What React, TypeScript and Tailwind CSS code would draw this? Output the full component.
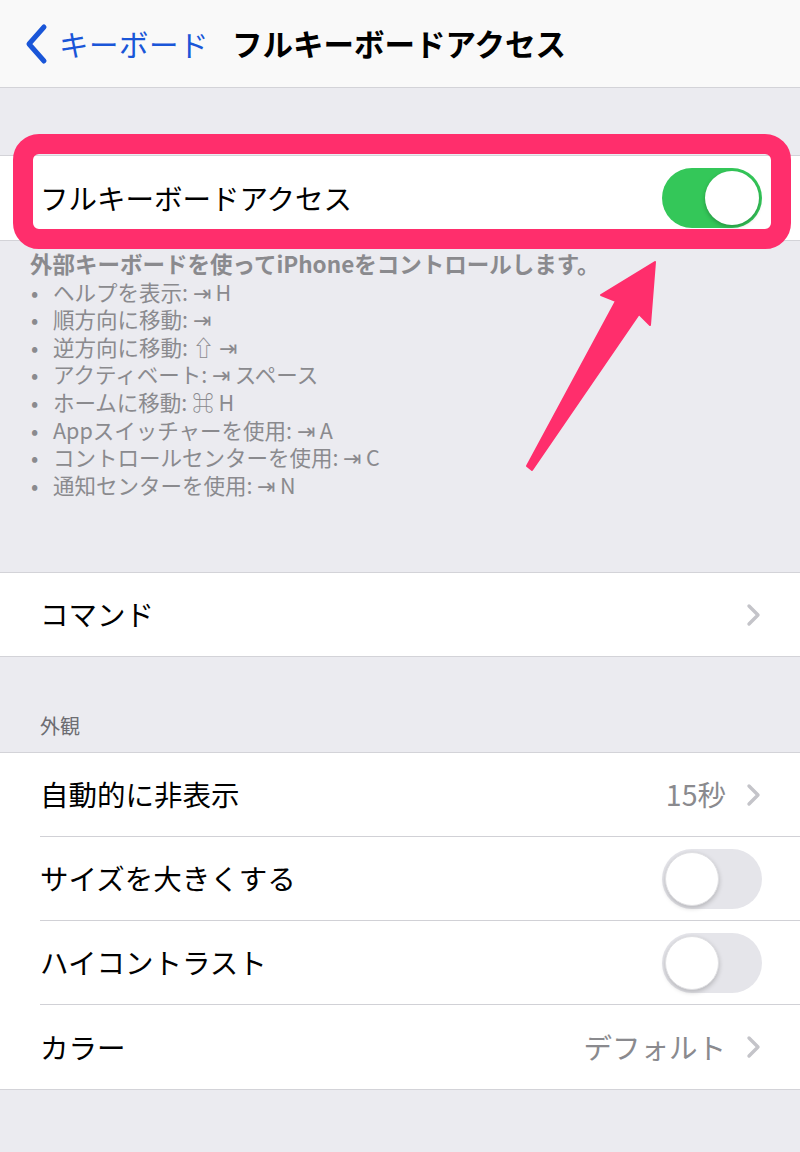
import React from "react";

const font = {
  fontFamily: '"Noto Sans CJK JP", "Noto Sans", "Liberation Sans", sans-serif',
};

const Chevron = () => (
  <svg width="16" height="24" viewBox="0 0 16 24" className="shrink-0">
    <path
      d="M3 3 L12 12 L3 21"
      fill="none"
      stroke="#c4c4c9"
      strokeWidth="3.4"
      strokeLinecap="round"
      strokeLinejoin="round"
    />
  </svg>
);

const Toggle = ({ on }: { on: boolean }) =>
  on ? (
    <div className="w-[100px] h-[60px] rounded-full bg-[#34c759] flex items-center justify-end pr-[3px]">
      <div className="w-[54px] h-[54px] rounded-full bg-white shadow-[0_2px_4px_rgba(0,0,0,0.25)]" />
    </div>
  ) : (
    <div className="w-[100px] h-[60px] rounded-full bg-[#e5e5ea] flex items-center pl-[3px]">
      <div className="w-[54px] h-[54px] rounded-full bg-white shadow-[0_2px_5px_rgba(0,0,0,0.22)] border border-[#e0e0e3]" />
    </div>
  );

const helpItems = [
  "ヘルプを表示: ⇥ H",
  "順方向に移動: ⇥",
  "逆方向に移動: ⇧ ⇥",
  "アクティベート: ⇥ スペース",
  "ホームに移動: ⌘ H",
  "Appスイッチャーを使用: ⇥ A",
  "コントロールセンターを使用: ⇥ C",
  "通知センターを使用: ⇥ N",
];

interface RowProps {
  label: string;
  value?: string;
  toggle?: boolean;
  chevron?: boolean;
  last?: boolean;
  height?: string;
}

const Row: React.FC<RowProps> = ({
  label,
  value,
  toggle,
  chevron,
  last,
  height = "h-[84px]",
}) => (
  <div className="pl-[40px] bg-white">
    <div
      className={`${height} flex items-center justify-between pr-[38px] ${
        last ? "" : "border-b border-[#d1d1d6]"
      }`}
    >
      <span className="text-[28.5px] text-black">{label}</span>
      <div className="flex items-center gap-[20px]">
        {value && (
          <span className="text-[28.5px] text-[#8a8a8e]">{value}</span>
        )}
        {chevron && <Chevron />}
        {toggle !== undefined && <Toggle on={toggle} />}
      </div>
    </div>
  </div>
);

export default function App() {
  return (
    <div
      className="relative w-[800px] h-[1152px] overflow-hidden bg-[#ebebf0]"
      style={font}
    >
      {/* nav bar */}
      <div className="h-[88px] bg-[#f9f9f9] border-b border-[#d3d3d8] flex items-center">
        <div className="flex items-center pl-[24px] w-[232px]">
          <svg width="26" height="42" viewBox="0 0 26 42">
            <path
              d="M20 4 L5 21 L20 38"
              fill="none"
              stroke="#1a56d8"
              strokeWidth="5"
              strokeLinecap="round"
              strokeLinejoin="round"
            />
          </svg>
          <span className="ml-[9px] text-[29.5px] text-[#1a56d8] tracking-[0.5px]">
            キーボード
          </span>
        </div>
        <span className="text-[30.5px] font-bold text-black">
          フルキーボードアクセス
        </span>
      </div>

      <div className="h-[67px]" />

      <div className="h-[86px] bg-white border-y border-[#d3d3d8] flex items-center justify-between pl-[40px] pr-[38px]">
        <span className="text-[28.5px] text-black">フルキーボードアクセス</span>
        <Toggle on />
      </div>

      {/* footer */}
      <div className="pt-[9px] pl-[30px] h-[331px] text-[21.5px] leading-[27.6px] text-[#8a8a8e]">
        <div className="font-bold text-[22.5px]">
          外部キーボードを使ってiPhoneをコントロールします。
        </div>
        {helpItems.map((item) => (
          <div key={item} className="flex">
            <span className="w-[23px] pl-[1px]">•</span>
            <span>{item}</span>
          </div>
        ))}
      </div>

      <div className="bg-white border-y border-[#d3d3d8]">
        <Row label="コマンド" chevron last height="h-[83px]" />
      </div>

      <div className="h-[95px] flex items-end pl-[40px] pb-[14px]">
        <span className="text-[20px] leading-[24px] text-[#6d6d72]">外観</span>
      </div>

      <div className="bg-white border-y border-[#d3d3d8]">
        <Row label="自動的に非表示" value="15秒" chevron />
        <Row label="サイズを大きくする" toggle={false} />
        <Row label="ハイコントラスト" toggle={false} />
        <Row label="カラー" value="デフォルト" chevron last />
      </div>

      {/* annotation: highlight box */}
      <div className="absolute left-[13px] top-[134px] w-[778px] h-[115px] rounded-[26px] border-[20px] border-[#ff2e6c]" />

      {/* annotation: arrow */}
      <svg
        className="absolute left-0 top-0 pointer-events-none"
        width="800"
        height="1152"
        viewBox="0 0 800 1152"
      >
        <polygon
          points="655,262 601,295 616,301 527,466 532,470 639,314 650,325"
          fill="#ff2e6c"
          stroke="#ff2e6c"
          strokeWidth="2"
          strokeLinejoin="round"
        />
      </svg>
    </div>
  );
}
